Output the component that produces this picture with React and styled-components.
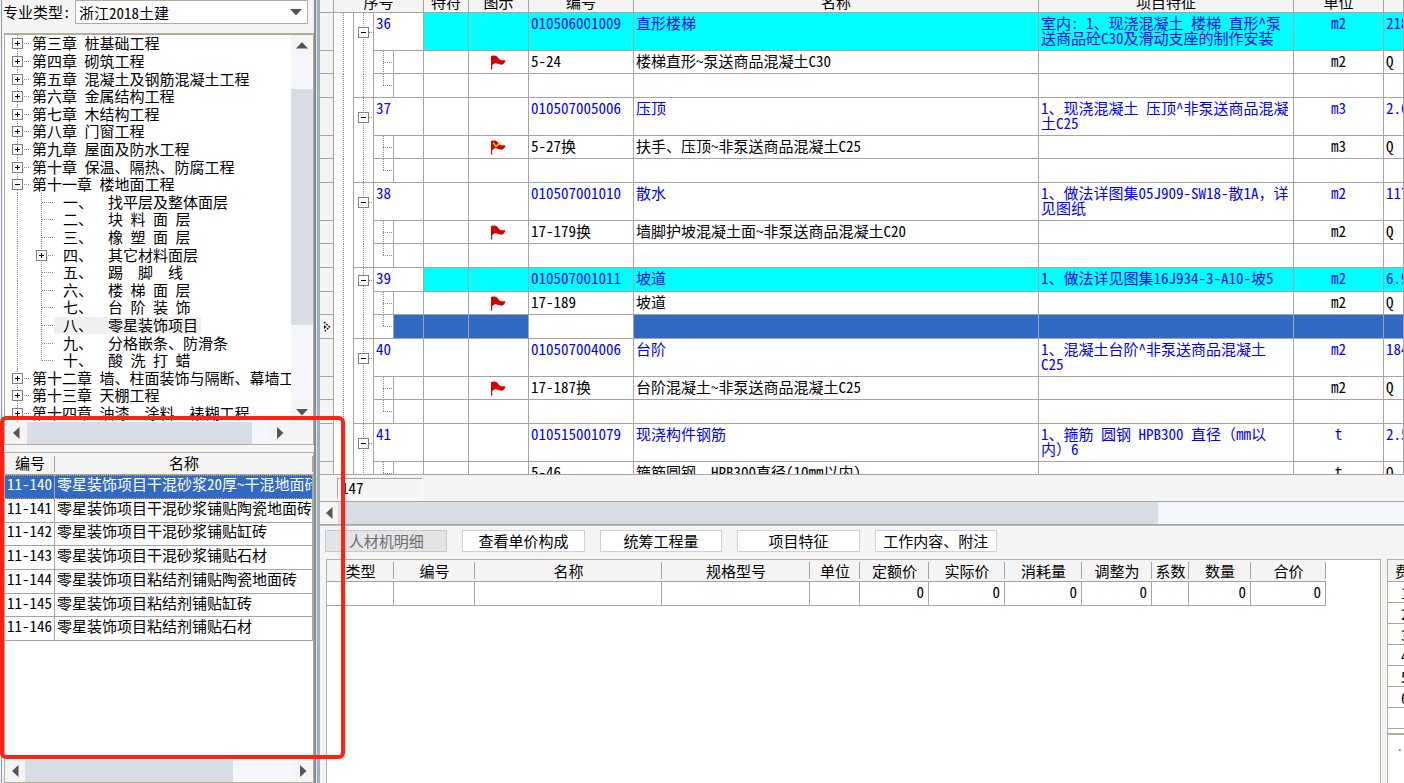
import { Fragment, useState } from 'react';
import styled, { createGlobalStyle, css } from 'styled-components';

const line = '#a4a4a4';
const edge = '#b4ad9f';
const panelBg = '#f4f4f4';
const thumbBg = '#d7dce5';
const trackBg = '#f4f6fb';
const selectedBg = '#316ac5';
const blue = '#0000ff';
const dot = '#8a8a8a';

const dotsDown = `repeating-linear-gradient(to bottom, ${dot} 0 1px, transparent 1px 2px)`;
const dotsRight = `repeating-linear-gradient(to right, ${dot} 0 1px, transparent 1px 2px)`;

const GlobalStyle = createGlobalStyle`
  * {
    box-sizing: border-box;
  }

  body {
    margin: 0;
    background-color: ${panelBg};
  }

  body, button, select, table {
    font-family: 'Noto Sans Mono CJK SC', 'Noto Sans CJK SC', 'Liberation Mono', monospace;
    font-size: 15px;
    line-height: 15px;
    color: #000;
  }

  table {
    border-collapse: separate;
    border-spacing: 0;
    table-layout: fixed;
  }

  th, td {
    padding: 0;
    font-weight: normal;
    text-align: left;
  }

  ul {
    margin: 0;
    padding: 0;
    list-style: none;
  }
`;

const Shell = styled.div`
  position: relative;
  height: 100vh;
  overflow: hidden;
  display: flex;
`;

const Sidebar = styled.aside`
  flex: 0 0 314px;
  min-width: 0;
  display: flex;
  flex-direction: column;
  padding-left: 1px;
  background-color: ${panelBg};

  &::before {
    content: '';
    position: absolute;
    top: 0;
    bottom: 0;
    left: 1px;
    width: 1px;
    background-color: #8d979e;
  }
`;

const Splitter = styled.div`
  flex: 0 0 6px;
  border-left: 2px solid #858d93;
  border-right: 1px solid #a9adb0;
  background: linear-gradient(to right, #dde3e7 1px, #95b5c6 1px);
`;

const Workspace = styled.main`
  flex: 1;
  min-width: 0;
  display: flex;
  flex-direction: column;
`;

/* sidebar header */

const Field = styled.div`
  flex: 0 0 33px;
  display: flex;
  align-items: flex-start;
  padding: 0 6px 0 2px;
`;

const FieldLabel = styled.label`
  flex: 0 0 72px;
  padding-top: 4px;
  white-space: nowrap;
`;

const SelectBox = styled.div`
  position: relative;
  flex: 1;
`;

const Select = styled.select`
  width: 100%;
  height: 24px;
  padding: 0 24px 0 3px;
  border: 1px solid ${edge};
  border-radius: 0;
  background-color: #fff;
  appearance: none;
`;

const SelectArrow = styled.svg`
  position: absolute;
  top: 9px;
  right: 6px;
  pointer-events: none;
`;

/* scroll bars */

const Bar = styled.div`
  flex: 0 0 22px;
  display: flex;
  flex-direction: ${({ $vertical }) => ($vertical ? 'column' : 'row')};
  background-color: ${panelBg};
`;

const BarButton = styled.button`
  flex: 0 0 ${({ $size }) => $size}px;
  display: flex;
  align-items: center;
  justify-content: center;
  padding: 0;
  border: 0;
  background-color: ${panelBg};
`;

const BarPart = styled.div`
  flex: ${({ $grow }) => $grow} 1 0;
  background-color: ${({ $thumb }) => ($thumb ? thumbBg : trackBg)};
`;

const BarCorner = styled.div`
  flex: 0 0 22px;
`;

/* chapter tree */

const TreePanel = styled.section`
  flex: 412 1 0;
  min-height: 0;
  margin-left: 3px;
  display: flex;
  flex-direction: column;
  border: 1px solid ${edge};
  border-width: 2px 1px 1px;
  background-color: #fff;
`;

const TreeBody = styled.div`
  flex: 1;
  min-height: 0;
  display: flex;
`;

const Tree = styled.ul`
  flex: 1;
  min-width: 0;
  overflow: hidden;
  display: grid;
  grid-auto-rows: 1fr;
`;

const TreeRow = styled.li`
  display: flex;
  align-items: center;
  min-height: 0;
  white-space: pre;
  background: ${dotsDown} 12px 0 / 1px 100% no-repeat;
`;

const TreeToggle = styled.span`
  flex: 0 0 25px;
  display: flex;
  align-items: center;
  padding-left: 7px;
  background: ${({ $on }) => ($on ? `${dotsRight} 19px center / 6px 1px no-repeat` : 'none')};
`;

const TreeBranch = styled.span`
  flex: 0 0 24px;
  align-self: stretch;
  display: flex;
  align-items: center;
  padding-left: 6px;
  background: ${({ $last }) => `${dotsDown} 11px 0 / 1px ${$last ? '50%' : '100%'} no-repeat, ${dotsRight} 12px center / 12px 1px no-repeat`};
`;

const TreeText = styled.span`
  padding: 0 0 1px 2px;
  line-height: 16px;

  ${({ $child }) =>
    $child &&
    css`
      padding: 0 3px 1px 9px;
    `}

  ${({ $active }) =>
    $active &&
    css`
      background-color: #f0f0f0;
    `}
`;

const ToggleButton = styled.button`
  width: 11px;
  height: 11px;
  padding: 0;
  border: 0;
  display: block;
  background-color: #fff;

  svg {
    display: block;
  }
`;

/* quota list */

const ListPanel = styled.section`
  flex: 331 1 0;
  min-height: 0;
  margin: 7px 0 0 3px;
  display: flex;
  flex-direction: column;
  border: 1px solid ${edge};
  background-color: #fff;
`;

const ListBody = styled.div`
  flex: 1;
  overflow: hidden;
`;

const ListTable = styled.table`
  width: 100%;
  height: 188px;

  th {
    height: 22px;
    padding-bottom: 2px;
    text-align: center;
    background-color: ${panelBg};
    border-bottom: 1px solid ${line};
    background-image: linear-gradient(${line}, ${line});
    background-size: 1px 16px;
    background-position: right 3px;
    background-repeat: no-repeat;
  }

  td {
    padding: 0 0 6px 2px;
    overflow: hidden;
    white-space: nowrap;
    border-right: 1px solid ${line};
    border-bottom: 1px solid ${line};
  }
`;

const ListRow = styled.tr`
  ${({ $active }) =>
    $active &&
    css`
      color: #fff;
      background-color: ${selectedBg};

      td {
        border-bottom: 1px dotted #d9a441;
        background: repeating-linear-gradient(to right, #d9a441 0 1px, transparent 1px 2px) 0 0 / 100% 1px no-repeat;
      }
    `}
`;

/* bill of quantities grid */

const GridArea = styled.section`
  flex: 475 1 0;
  min-height: 0;
  overflow: hidden;
  background-color: #fff;
  border-bottom: 1px solid ${line};
`;

const Grid = styled.table`
  width: 100%;
`;

const GridHead = styled.th`
  height: 13px;
  background-color: ${panelBg};
  border-bottom: 1px solid ${line};
  border-right: 1px solid ${line};
`;

const GridHeadText = styled.div`
  height: 12px;
  overflow: hidden;
  display: flex;
  align-items: flex-end;
  justify-content: center;
  line-height: 20px;
  white-space: nowrap;
`;

const cellHeight = { item: 38, single: 24, sub: 23, blank: 24 };

const Cell = styled.td`
  height: ${({ $kind }) => cellHeight[$kind]}px;
  padding: 2px 2px 0;
  overflow: hidden;
  vertical-align: top;
  white-space: pre;
  text-align: ${({ $center }) => ($center ? 'center' : 'left')};
  color: ${({ $kind }) => ($kind === 'item' || $kind === 'single' ? blue : '#000')};
  background-color: ${({ $fill }) => $fill || '#fff'};
  border-right: 1px solid ${line};
  border-bottom: 1px solid ${line};
`;

const Indicator = styled(Cell)`
  background-color: ${panelBg};
  padding: 0 0 0 3px;
  vertical-align: middle;
`;

const Gutter = styled.td`
  border-right: 1px solid ${line};
  background: ${dotsDown} 9px 0 / 1px 100% no-repeat #fff;
`;

const GroupGutter = styled(Gutter)`
  vertical-align: middle;
  border-bottom: ${({ $end }) => ($end ? `1px solid ${line}` : '0')};

  & > div {
    padding-left: 4px;
    background: ${dotsRight} 15px center / 4px 1px no-repeat;
  }
`;

const Elbow = styled(Cell)`
  background: ${({ $end }) => `${dotsDown} 9px 0 / 1px ${$end ? '50%' : '100%'} no-repeat, ${dotsRight} 9px center / 9px 1px no-repeat #fff`};
`;

const Total = styled.div`
  flex: 0 0 27px;
  padding: 3px 0 0 17px;
  border-bottom: 1px solid ${line};
`;

const TotalBox = styled.div`
  width: 86px;
  height: 21px;
  padding: 1px 3px;
  border: 1px solid #a8a8a8;
  border-right-color: #fff;
  border-bottom-color: #fff;
`;

const Divider = styled.div`
  flex: 0 0 2px;
  border-top: 1px solid #a8a69c;
  background-color: #a9c0cb;
`;

/* detail area */

const Tabs = styled.nav`
  flex: 0 0 33px;
  width: 672px;
  margin-left: 5px;
  padding-top: 4px;
  display: grid;
  grid-template-columns: repeat(5, 1fr);
  grid-auto-rows: 22px;
  column-gap: 15px;
`;

const TabButton = styled.button`
  padding: 0 0 2px;
  border: 1px solid #ccd1dc;
  background-color: #fff;
  white-space: nowrap;

  &:disabled {
    color: #6d6d6d;
    background-color: #e4e4e4;
    border-color: #c3c8d2;
  }
`;

const DetailArea = styled.section`
  flex: 224 1 0;
  min-height: 0;
  display: flex;
  gap: 6px;
  padding-left: 6px;
`;

const DetailPanel = styled.div`
  flex: 1;
  min-width: 0;
  overflow: hidden;
  background-color: #fff;
  border: 1px solid ${edge};
  border-bottom: 0;
`;

const DetailTable = styled.table`
  width: 999px;

  th {
    height: 22px;
    text-align: center;
    white-space: nowrap;
    background-color: ${panelBg};
    border-bottom: 1px solid ${line};
    background-image: linear-gradient(${line}, ${line});
    background-size: 1px 17px;
    background-position: right 2px;
    background-repeat: no-repeat;
  }

  td {
    height: 24px;
    padding: 0 4px 4px 0;
    text-align: right;
    vertical-align: middle;
    border-right: 1px solid ${line};
    border-bottom: 1px solid ${line};
  }
`;

const FeePanel = styled.div`
  flex: 0 0 17px;
  overflow: hidden;
  background-color: #fff;
  border-top: 1px solid ${edge};
  border-left: 1px solid ${edge};
`;

const FeeTable = styled.table`
  width: 64px;

  th {
    height: 22px;
    padding-left: 7px;
    background-color: ${panelBg};
    border-bottom: 1px solid ${line};
  }

  td {
    height: 21px;
    padding-left: 13px;
    border-bottom: 1px solid ${line};
  }
`;

const FeeNote = styled.div`
  margin-top: 4px;
  padding: 2px 0 0 8px;
  border-top: 2px solid ${edge};
  color: #777;
`;

/* red frame drawn over the quota list */

const Frame = styled.div`
  position: absolute;
  top: 416px;
  left: 0;
  width: 345px;
  height: 343px;
  border: 4px solid #ff2114;
  border-radius: 6px;
  pointer-events: none;
`;

const arrows = {
  up: 'M0 6.5 L6 0 L12 6.5 Z',
  down: 'M0 0 L12 0 L6 6.5 Z',
  left: 'M6.5 0 L6.5 12 L0 6 Z',
  right: 'M0 0 L6.5 6 L0 12 Z',
};

const Arrow = ({ to }) => {
  const flat = to === 'up' || to === 'down';
  return (
    <svg width={flat ? 12 : 7} height={flat ? 7 : 12} fill='#555'>
      <path d={arrows[to]} />
    </svg>
  );
};

const Toggle = ({ plus, onClick }) => (
  <ToggleButton type='button' aria-label={plus ? '展开' : '折叠'} onClick={onClick}>
    <svg width='11' height='11' shapeRendering='crispEdges'>
      <rect x='0.5' y='0.5' width='10' height='10' fill='#fff' stroke='#808080' />
      <path d={plus ? 'M3 5.5 H8 M5.5 3 V8' : 'M3 5.5 H8'} stroke='#000' />
    </svg>
  </ToggleButton>
);

const FlagIcon = styled.svg`
  display: block;
  margin: 2px auto 0;
`;

const Flag = ({ checked }) => (
  <FlagIcon width='15' height='15' viewBox='0 0 15 15'>
    <path d='M0.6 1 V14.5' stroke='#d40000' strokeWidth='1.2' />
    <path d='M0.5 1 C2.5 0.4 4.5 0.4 6 1.6 C7.5 3 8 4.8 10 5.2 C11.5 5.6 13 5 14.5 5.4 C13.6 8 12 10 9.5 9.6 C7 9.2 5 7.6 3 8.8 L0.5 10.4 Z' fill='#d40000' />
    {checked && <path d='M2 2.5 L5 6.5 L9.5 2.5' fill='none' stroke='#ffd800' strokeWidth='1.3' />}
  </FlagIcon>
);

const MarkerIcon = styled.svg`
  display: block;
`;

const Marker = () => (
  <MarkerIcon width='8' height='12' viewBox='0 0 8 12'>
    <path d='M1 1 L6.5 6 L1 11' fill='none' stroke='#000' strokeWidth='1.2' strokeDasharray='2 1' />
    <path d='M1 4 L3.5 6 L1 8 Z' />
  </MarkerIcon>
);

const chapters = [
  { text: '第三章 桩基础工程' },
  { text: '第四章 砌筑工程' },
  { text: '第五章 混凝土及钢筋混凝土工程' },
  { text: '第六章 金属结构工程' },
  { text: '第七章 木结构工程' },
  { text: '第八章 门窗工程' },
  { text: '第九章 屋面及防水工程' },
  { text: '第十章 保温、隔热、防腐工程' },
  {
    text: '第十一章 楼地面工程',
    children: [
      '一、  找平层及整体面层',
      '二、  块 料 面 层',
      '三、  橡 塑 面 层',
      '四、  其它材料面层',
      '五、  踢  脚  线',
      '六、  楼 梯 面 层',
      '七、  台 阶 装 饰',
      '八、  零星装饰项目',
      '九、  分格嵌条、防滑条',
      '十、  酸 洗 打 蜡',
    ],
  },
  { text: '第十二章 墙、柱面装饰与隔断、幕墙工程' },
  { text: '第十三章 天棚工程' },
  { text: '第十四章 油漆、涂料、裱糊工程' },
];

const quotas = [
  ['11-140', '零星装饰项目干混砂浆20厚~干混地面砖'],
  ['11-141', '零星装饰项目干混砂浆铺贴陶瓷地面砖'],
  ['11-142', '零星装饰项目干混砂浆铺贴缸砖'],
  ['11-143', '零星装饰项目干混砂浆铺贴石材'],
  ['11-144', '零星装饰项目粘结剂铺贴陶瓷地面砖'],
  ['11-145', '零星装饰项目粘结剂铺贴缸砖'],
  ['11-146', '零星装饰项目粘结剂铺贴石材'],
];

const bills = [
  {
    no: 36,
    code: '010506001009',
    name: '直形楼梯',
    feature: '室内: 1、现浇混凝土 楼梯 直形^泵\n送商品砼C30及滑动支座的制作安装',
    unit: 'm2',
    amount: '218',
    marked: true,
    sub: { code: '5-24', name: '楼梯直形~泵送商品混凝土C30' },
  },
  {
    no: 37,
    code: '010507005006',
    name: '压顶',
    feature: '1、现浇混凝土 压顶^非泵送商品混凝\n土C25',
    unit: 'm3',
    amount: '2.6',
    sub: { code: '5-27换', name: '扶手、压顶~非泵送商品混凝土C25', checked: true },
  },
  {
    no: 38,
    code: '010507001010',
    name: '散水',
    feature: '1、做法详图集05J909-SW18-散1A，详\n见图纸',
    unit: 'm2',
    amount: '117',
    sub: { code: '17-179换', name: '墙脚护坡混凝土面~非泵送商品混凝土C20' },
  },
  {
    no: 39,
    code: '010507001011',
    name: '坡道',
    feature: '1、做法详见图集16J934-3-A10-坡5',
    unit: 'm2',
    amount: '6.9',
    marked: true,
    single: true,
    current: true,
    sub: { code: '17-189', name: '坡道' },
  },
  {
    no: 40,
    code: '010507004006',
    name: '台阶',
    feature: '1、混凝土台阶^非泵送商品混凝土\nC25',
    unit: 'm2',
    amount: '184',
    sub: { code: '17-187换', name: '台阶混凝土~非泵送商品混凝土C25' },
  },
  {
    no: 41,
    code: '010515001079',
    name: '现浇构件钢筋',
    feature: '1、箍筋 圆钢 HPB300 直径（mm以\n内）6',
    unit: 't',
    amount: '2.5',
    sub: { code: '5-46', name: '箍筋圆钢  HPB300直径(10mm以内)', noFlag: true },
  },
];

const tabs = ['人材机明细', '查看单价构成', '统筹工程量', '项目特征', '工作内容、附注'];

const detailColumns = [
  { title: '类型', width: 67 },
  { title: '编号', width: 81 },
  { title: '名称', width: 187 },
  { title: '规格型号', width: 148 },
  { title: '单位', width: 50 },
  { title: '定额价', width: 69, value: 0 },
  { title: '实际价', width: 76, value: 0 },
  { title: '消耗量', width: 77, value: 0 },
  { title: '调整为', width: 70, value: 0 },
  { title: '系数', width: 37 },
  { title: '数量', width: 62, value: 0 },
  { title: '合价', width: 75, value: 0 },
];

const BillRows = ({ bill }) => {
  const kind = bill.single ? 'single' : 'item';
  const fill = bill.marked ? '#00ffff' : undefined;
  const current = bill.current ? selectedBg : undefined;

  return (
    <Fragment>
      <tr>
        <Indicator $kind={kind} />
        <Gutter />
        <GroupGutter>
          <div>
            <Toggle />
          </div>
        </GroupGutter>
        <Cell $kind={kind} colSpan={2}>{bill.no}</Cell>
        <Cell $kind={kind} $fill={fill} />
        <Cell $kind={kind} $fill={fill} />
        <Cell $kind={kind} $fill={fill}>{bill.code}</Cell>
        <Cell $kind={kind} $fill={fill}>{bill.name}</Cell>
        <Cell $kind={kind} $fill={fill}>{bill.feature}</Cell>
        <Cell $kind={kind} $fill={fill} $center>{bill.unit}</Cell>
        <Cell $kind={kind} $fill={fill}>{bill.amount}</Cell>
      </tr>
      <tr>
        <Indicator $kind='sub' />
        <Gutter />
        <GroupGutter />
        <Elbow $kind='sub' />
        <Cell $kind='sub' />
        <Cell $kind='sub' />
        <Cell $kind='sub'>{!bill.sub.noFlag && <Flag checked={bill.sub.checked} />}</Cell>
        <Cell $kind='sub'>{bill.sub.code}</Cell>
        <Cell $kind='sub'>{bill.sub.name}</Cell>
        <Cell $kind='sub' />
        <Cell $kind='sub' $center>{bill.unit}</Cell>
        <Cell $kind='sub'>Q</Cell>
      </tr>
      <tr>
        <Indicator $kind='blank'>{bill.current && <Marker />}</Indicator>
        <Gutter />
        <GroupGutter $end />
        <Elbow $kind='blank' $end />
        <Cell $kind='blank' $fill={current} />
        <Cell $kind='blank' $fill={current} />
        <Cell $kind='blank' $fill={current} />
        <Cell $kind='blank' />
        <Cell $kind='blank' $fill={current} />
        <Cell $kind='blank' $fill={current} />
        <Cell $kind='blank' $fill={current} />
        <Cell $kind='blank' $fill={current} />
      </tr>
    </Fragment>
  );
};

const App = () => {
  const [quota, setQuota] = useState('11-140');

  return (
    <Shell>
      <GlobalStyle />
      <Sidebar>
        <Field>
          <FieldLabel htmlFor='specialty'>专业类型:</FieldLabel>
          <SelectBox>
            <Select id='specialty' defaultValue='zj2018'>
              <option value='zj2018'>浙江2018土建</option>
            </Select>
            <SelectArrow width='12' height='7' fill='#555'>
              <path d={arrows.down} />
            </SelectArrow>
          </SelectBox>
        </Field>

        <TreePanel>
          <TreeBody>
            <Tree>
              {chapters.map((chapter) => (
                <Fragment key={chapter.text}>
                  <TreeRow>
                    <TreeToggle $on>
                      <Toggle plus={!chapter.children} />
                    </TreeToggle>
                    <TreeText>{chapter.text}</TreeText>
                  </TreeRow>
                  {chapter.children?.map((text, i) => (
                    <TreeRow key={text}>
                      <TreeToggle />
                      <TreeBranch $last={i === chapter.children.length - 1}>{i === 3 && <Toggle plus />}</TreeBranch>
                      <TreeText $child $active={i === 7}>
                        {text}
                      </TreeText>
                    </TreeRow>
                  ))}
                </Fragment>
              ))}
            </Tree>
            <Bar $vertical>
              <BarButton $size={20} aria-label='上'>
                <Arrow to='up' />
              </BarButton>
              <BarPart $grow={34} />
              <BarPart $grow={236} $thumb />
              <BarPart $grow={77} />
              <BarButton $size={20} aria-label='下'>
                <Arrow to='down' />
              </BarButton>
            </Bar>
          </TreeBody>
          <Bar>
            <BarButton $size={22} aria-label='左'>
              <Arrow to='left' />
            </BarButton>
            <BarPart $grow={224} $thumb />
            <BarPart $grow={17} />
            <BarButton $size={22} aria-label='右'>
              <Arrow to='right' />
            </BarButton>
            <BarCorner />
          </Bar>
        </TreePanel>

        <ListPanel>
          <ListBody>
            <ListTable>
              <colgroup>
                <col width='50' />
                <col />
              </colgroup>
              <thead>
                <tr>
                  <th>编号</th>
                  <th>名称</th>
                </tr>
              </thead>
              <tbody>
                {quotas.map(([code, name]) => (
                  <ListRow key={code} $active={code === quota} onClick={() => setQuota(code)}>
                    <td>{code}</td>
                    <td>{name}</td>
                  </ListRow>
                ))}
              </tbody>
            </ListTable>
          </ListBody>
          <Bar>
            <BarButton $size={20} aria-label='左'>
              <Arrow to='left' />
            </BarButton>
            <BarPart $grow={206} $thumb />
            <BarPart $grow={60} />
            <BarButton $size={20} aria-label='右'>
              <Arrow to='right' />
            </BarButton>
          </Bar>
        </ListPanel>
      </Sidebar>

      <Splitter />

      <Workspace>
        <GridArea>
          <Grid>
            <colgroup>
              <col width='14' />
              <col width='20' />
              <col width='20' />
              <col width='20' />
              <col width='30' />
              <col width='45' />
              <col width='60' />
              <col width='105' />
              <col />
              <col width='255' />
              <col width='90' />
              <col width='20' />
            </colgroup>
            <thead>
              <tr>
                <GridHead />
                <GridHead colSpan={4}>
                  <GridHeadText>序号</GridHeadText>
                </GridHead>
                {['特符', '图示', '编号', '名称', '项目特征', '单位', ''].map((title) => (
                  <GridHead key={title}>
                    <GridHeadText>{title}</GridHeadText>
                  </GridHead>
                ))}
              </tr>
            </thead>
            <tbody>
              {bills.map((bill) => (
                <BillRows key={bill.no} bill={bill} />
              ))}
            </tbody>
          </Grid>
        </GridArea>
        <Total>
          <TotalBox>147</TotalBox>
        </Total>
        <Bar>
          <BarButton $size={18} aria-label='左'>
            <Arrow to='left' />
          </BarButton>
          <BarPart $grow={820} $thumb />
          <BarPart $grow={246} />
        </Bar>
        <Divider />

        <Tabs>
          {tabs.map((title, i) => (
            <TabButton key={title} type='button' disabled={i === 0}>
              {title}
            </TabButton>
          ))}
        </Tabs>
        <DetailArea>
          <DetailPanel>
            <DetailTable>
              <colgroup>
                {detailColumns.map(({ title, width }) => (
                  <col key={title} width={width} />
                ))}
              </colgroup>
              <thead>
                <tr>
                  {detailColumns.map(({ title }) => (
                    <th key={title}>{title}</th>
                  ))}
                </tr>
              </thead>
              <tbody>
                <tr>
                  {detailColumns.map(({ title, value }) => (
                    <td key={title}>{value}</td>
                  ))}
                </tr>
              </tbody>
            </DetailTable>
          </DetailPanel>
          <FeePanel>
            <FeeTable>
              <thead>
                <tr>
                  <th>费用</th>
                </tr>
              </thead>
              <tbody>
                {[1, 2, 3, 4, 5, 6, 7].map((n) => (
                  <tr key={n}>
                    <td>{n < 7 && n}</td>
                  </tr>
                ))}
              </tbody>
            </FeeTable>
            <FeeNote>...</FeeNote>
          </FeePanel>
        </DetailArea>
      </Workspace>

      <Frame />
    </Shell>
  );
};

export default App;
